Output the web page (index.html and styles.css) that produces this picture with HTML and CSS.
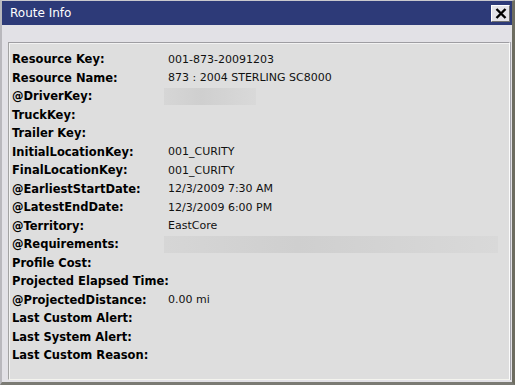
FILE: index.html
```html
<!DOCTYPE html>
<html>
<head>
<meta charset="utf-8">
<link rel="stylesheet" href="styles.css">
</head>
<body>
<div class="window">
  <div class="titlebar">
    <span class="title">Route Info</span>
    <span class="close"><svg width="12" height="11" viewBox="0 0 12 11"><path d="M1.5 1 L10.5 10 M10.5 1 L1.5 10" stroke="#000" stroke-width="2.4" fill="none"/></svg></span>
  </div>
  <div class="toolbar"></div>
  <div class="panel">
    <div class="grid">
      <div class="label">Resource Key:</div><div class="value">001-873-20091203</div>
      <div class="label">Resource Name:</div><div class="value">873 : 2004 STERLING SC8000</div>
      <div class="label">@DriverKey:</div><div class="value"><span class="blur short"></span></div>
      <div class="label">TruckKey:</div><div class="value"></div>
      <div class="label">Trailer Key:</div><div class="value"></div>
      <div class="label">InitialLocationKey:</div><div class="value">001_CURITY</div>
      <div class="label">FinalLocationKey:</div><div class="value">001_CURITY</div>
      <div class="label">@EarliestStartDate:</div><div class="value">12/3/2009 7:30 AM</div>
      <div class="label">@LatestEndDate:</div><div class="value">12/3/2009 6:00 PM</div>
      <div class="label">@Territory:</div><div class="value">EastCore</div>
      <div class="label">@Requirements:</div><div class="value"><span class="blur long"></span></div>
      <div class="label">Profile Cost:</div><div class="value"></div>
      <div class="label">Projected Elapsed Time:</div><div class="value"></div>
      <div class="label">@ProjectedDistance:</div><div class="value">0.00 mi</div>
      <div class="label">Last Custom Alert:</div><div class="value"></div>
      <div class="label">Last System Alert:</div><div class="value"></div>
      <div class="label">Last Custom Reason:</div><div class="value"></div>
    </div>
  </div>
</div>
</body>
</html>
```

FILE: styles.css
```css
html, body {
  margin: 0;
  padding: 0;
  background: #e2e1e6;
}
.window {
  width: 515px;
  height: 385px;
  box-sizing: border-box;
  background: #e2e1e6;
  border-left: 2px solid #b9b8bd;
  border-top: 1px solid #c9c8cd;
  border-right: 3px solid #6d6c60;
  border-bottom: 3px solid #7b7b74;
  display: flex;
  flex-direction: column;
  font-family: "DejaVu Sans", Verdana, sans-serif;
}
.titlebar {
  height: 24px;
  flex: none;
  background: #2d3a78;
  display: flex;
  align-items: center;
  justify-content: space-between;
  padding: 0 2px 0 8px;
}
.title {
  color: #fff;
  font-size: 12px;
}
.close {
  width: 17px;
  height: 15px;
  background: #e4e3e8;
  border: 1px solid;
  border-color: #fff #6f6f6f #6f6f6f #fff;
  display: flex;
  align-items: center;
  justify-content: center;
}
.toolbar {
  height: 17px;
  flex: none;
}
.panel {
  flex: 1;
  margin: 0 2px 2px 6px;
  background: #dedede;
  border-top: 1px solid #9e9da2;
  border-left: 1px solid #a3a3a3;
  border-right: 1px solid #fbfbfb;
  border-bottom: 1px solid #f4f4ee;
  box-shadow: 1px 0 0 #a3a3ab, inset 1px 1px 0 #f2f2f2;
  padding: 7px 0 0 3px;
}
.grid {
  display: grid;
  grid-template-columns: 156px 1fr;
  grid-auto-rows: 18.5px;
  align-items: center;
}
.label {
  font-weight: bold;
  font-size: 11.5px;
  color: #000;
  white-space: nowrap;
}
.value {
  font-size: 11px;
  color: #111;
  white-space: nowrap;
  height: 100%;
  display: flex;
  align-items: center;
}
.blur {
  display: block;
  height: 17px;
  margin-left: -4px;
  background: linear-gradient(90deg, #d6d6d6, #cfcfcf 40%, #d4d4d4 70%, #d9d9d9);
}
.blur.short { width: 92px; }
.blur.long { width: 334px; }
```
